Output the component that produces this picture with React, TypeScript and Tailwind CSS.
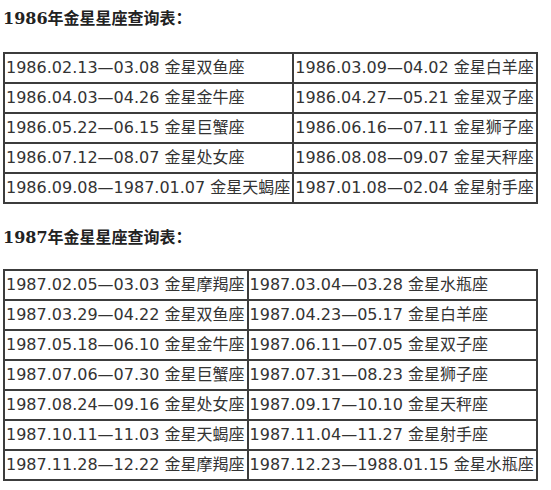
import React from "react";

type Row = [string, string];

const table1986: Row[] = [
  ["1986.02.13—03.08 金星双鱼座", "1986.03.09—04.02 金星白羊座"],
  ["1986.04.03—04.26 金星金牛座", "1986.04.27—05.21 金星双子座"],
  ["1986.05.22—06.15 金星巨蟹座", "1986.06.16—07.11 金星狮子座"],
  ["1986.07.12—08.07 金星处女座", "1986.08.08—09.07 金星天秤座"],
  ["1986.09.08—1987.01.07 金星天蝎座", "1987.01.08—02.04 金星射手座"],
];

const table1987: Row[] = [
  ["1987.02.05—03.03 金星摩羯座", "1987.03.04—03.28 金星水瓶座"],
  ["1987.03.29—04.22 金星双鱼座", "1987.04.23—05.17 金星白羊座"],
  ["1987.05.18—06.10 金星金牛座", "1987.06.11—07.05 金星双子座"],
  ["1987.07.06—07.30 金星巨蟹座", "1987.07.31—08.23 金星狮子座"],
  ["1987.08.24—09.16 金星处女座", "1987.09.17—10.10 金星天秤座"],
  ["1987.10.11—11.03 金星天蝎座", "1987.11.04—11.27 金星射手座"],
  ["1987.11.28—12.22 金星摩羯座", "1987.12.23—1988.01.15 金星水瓶座"],
];

function Heading({ children, className = "" }: { children: React.ReactNode; className?: string }) {
  return (
    <h2
      className={`h-6 text-[16px] leading-6 font-bold text-[#222] font-['DejaVu_Serif','Noto_Sans_CJK_SC',serif] ${className}`}
    >
      {children}
    </h2>
  );
}

function VenusTable({ rows, className = "" }: { rows: Row[]; className?: string }) {
  return (
    <table className={`border-collapse border-2 border-[#3c3c3c] ${className}`}>
      <tbody>
        {rows.map((row, i) => (
          <tr key={i}>
            {row.map((cell) => (
              <td
                key={cell}
                className="border-2 border-[#3c3c3c] pl-[1px] pr-[2px] py-0 h-[30px] leading-[28px] whitespace-nowrap text-[16px] text-[#333]"
              >
                {cell}
              </td>
            ))}
          </tr>
        ))}
      </tbody>
    </table>
  );
}

export default function App() {
  return (
    <div className="w-[551px] h-[490px] bg-white px-[3px] pt-[7px] font-['DejaVu_Sans','Noto_Sans_CJK_SC',sans-serif]">
      <Heading>1986年金星星座查询表：</Heading>
      <VenusTable rows={table1986} className="mt-[21px]" />
      <Heading className="mt-[22px]">1987年金星星座查询表：</Heading>
      <VenusTable rows={table1987} className="mt-[19px]" />
    </div>
  );
}
